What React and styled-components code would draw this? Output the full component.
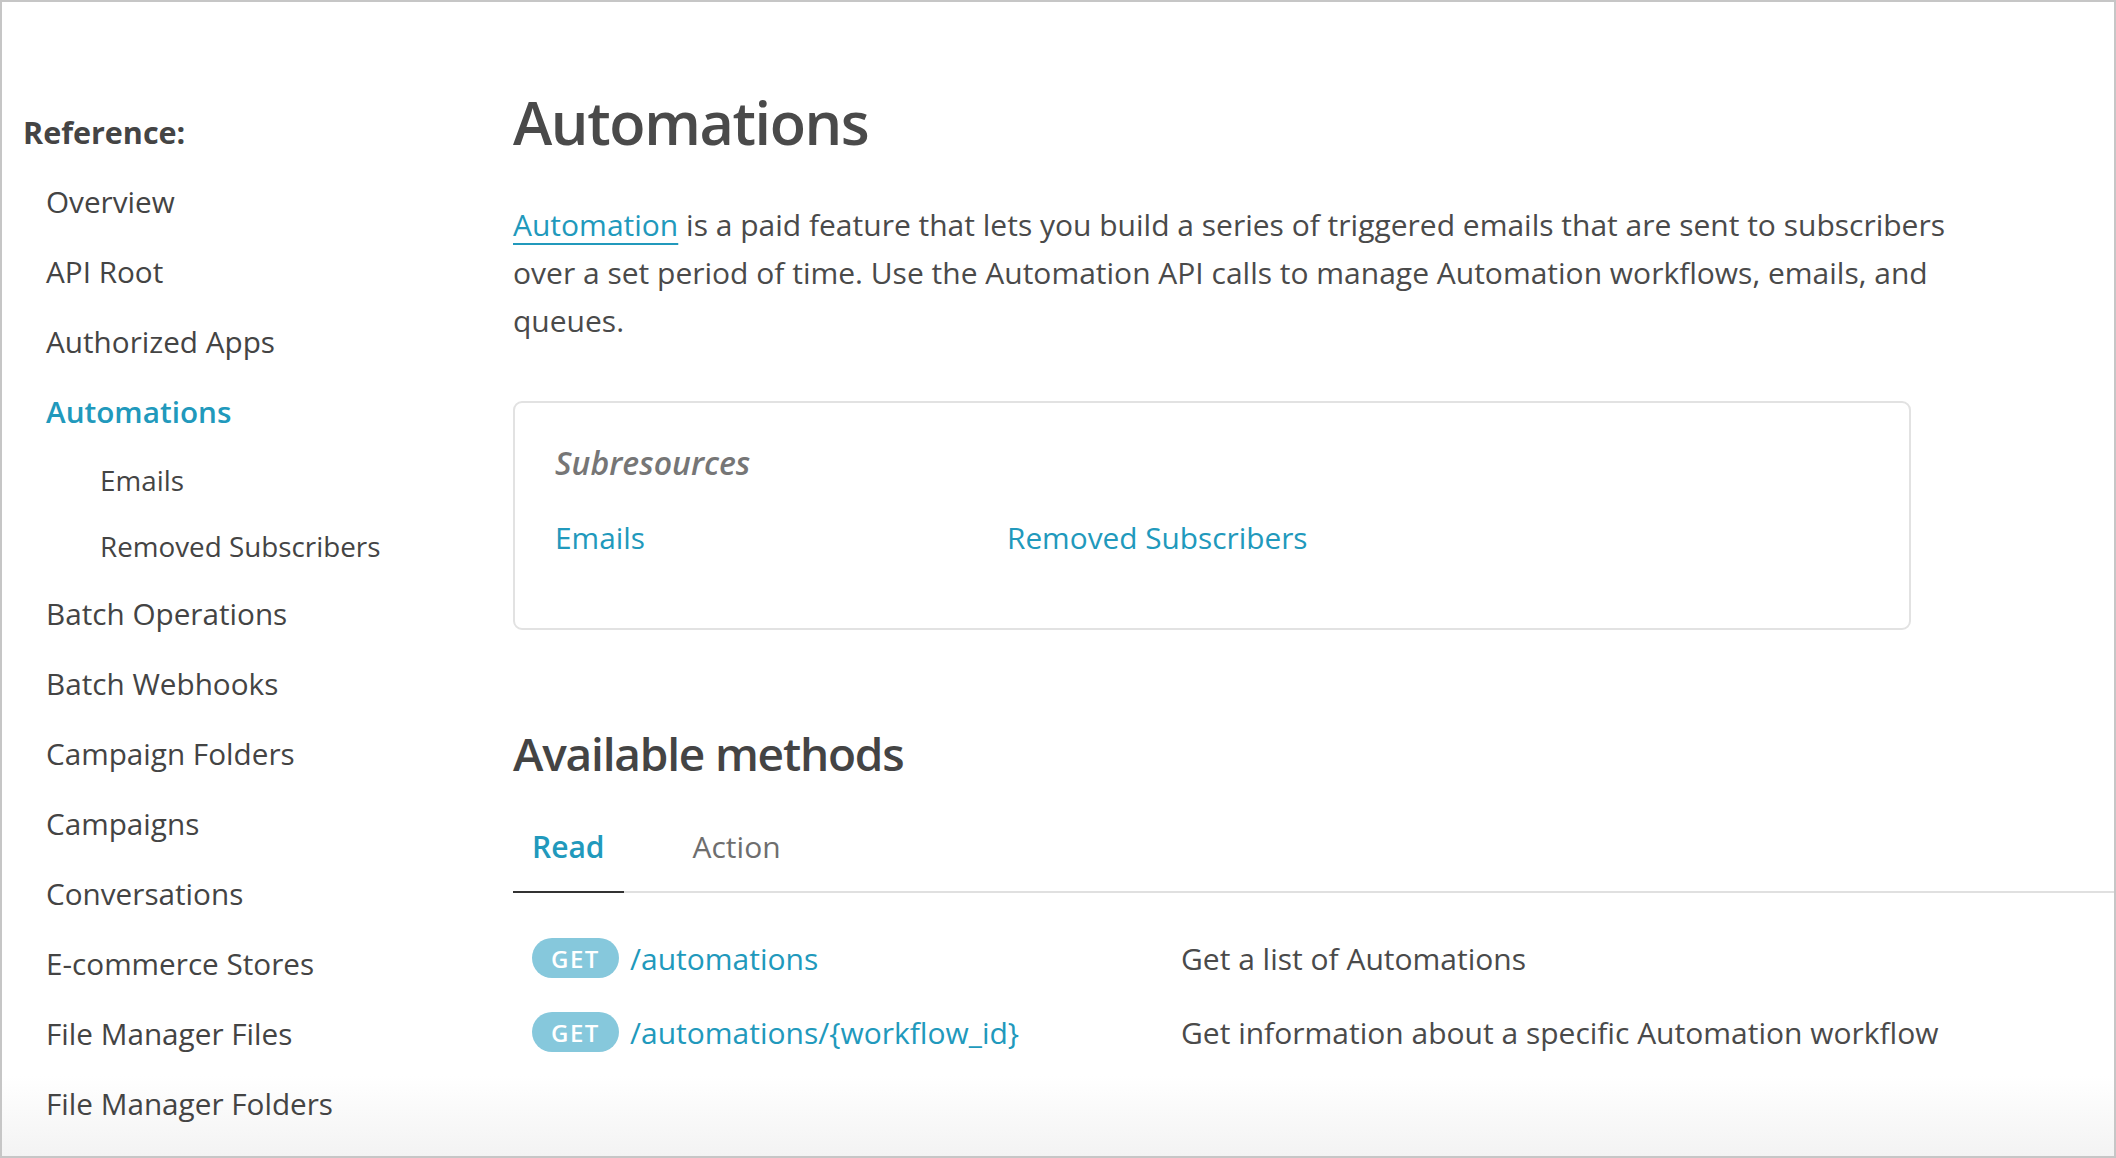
import React from "react";
import styled, { createGlobalStyle } from "styled-components";

const Global = createGlobalStyle`
  html, body {
    margin: 0;
    padding: 0;
    background: #fff;
  }
  body {
    font-family: "Open Sans", "Noto Sans", sans-serif;
    color: #4a4a4a;
  }
  * { box-sizing: border-box; }
`;

const Frame = styled.div`
  width: 2116px;
  height: 1158px;
  border: 2px solid #c6c6c6;
  overflow: hidden;
  display: grid;
  grid-template-columns: 511px 1fr;
  background: linear-gradient(to bottom, #fff calc(100% - 80px), #f3f3f3);
`;

const Sidebar = styled.nav`
  padding: 95px 0 0 21px;
  display: flex;
  flex-direction: column;
`;

const SideTitle = styled.div`
  font-size: 30.5px;
  font-weight: 700;
  line-height: 70px;
  color: #444;
`;

const SideItem = styled.a`
  display: block;
  font-size: ${(p) => (p.$sub ? "27.8px" : "29.7px")};
  line-height: ${(p) => (p.$sub ? "66px" : "70px")};
  padding-left: ${(p) => (p.$sub ? "77px" : "23px")};
  font-weight: ${(p) => (p.$active ? 600 : 400)};
  color: ${(p) => (p.$active ? "#2199bc" : "#444")};
  text-decoration: none;
  white-space: nowrap;
`;

const Main = styled.main`
  padding-top: 84px;
  display: flex;
  flex-direction: column;
  min-width: 0;
`;

const Title = styled.h1`
  margin: 0;
  font-size: 59.4px;
  line-height: 72px;
  font-weight: 600;
  letter-spacing: -1.4px;
  color: #4a4a4a;
`;

const Intro = styled.p`
  margin: 43px 0 0;
  max-width: 1460px;
  font-size: 30px;
  line-height: 48px;
  color: #4a4a4a;
`;

const Link = styled.a`
  color: #2199bc;
  text-decoration: ${(p) => (p.$underline ? "underline" : "none")};
  text-decoration-thickness: 2px;
  text-underline-offset: 7px;
`;

const SubBox = styled.section`
  margin-top: 56px;
  width: 1398px;
  height: 229px;
  border: 2px solid #e2e2e2;
  border-radius: 9px;
  padding: 40px 40px 0;
`;

const SubTitle = styled.h3`
  margin: 0;
  font-size: 32px;
  line-height: 40px;
  font-style: italic;
  font-weight: 600;
  color: #767676;
`;

const SubLinks = styled.div`
  margin-top: 35px;
  display: grid;
  grid-template-columns: 452px 452px;
  font-size: 29.8px;
  line-height: 40px;
`;

const SectionTitle = styled.h2`
  margin: 95px 0 0;
  font-size: 46px;
  line-height: 56px;
  font-weight: 600;
  letter-spacing: -1.2px;
  color: #444;
`;

const Tabs = styled.div`
  margin-top: 46px;
  display: flex;
  gap: 50px;
  border-bottom: 2px solid #e0e0e0;
`;

const Tab = styled.button`
  border: 0;
  background: none;
  font-family: inherit;
  font-size: 30px;
  line-height: 40px;
  padding: 0 19px 24px;
  margin-bottom: -2px;
  font-weight: ${(p) => (p.$active ? 600 : 500)};
  color: ${(p) => (p.$active ? "#2199bc" : "#6e6e6e")};
  border-bottom: 2px solid ${(p) => (p.$active ? "#333" : "transparent")};
  cursor: pointer;
`;

const Methods = styled.div`
  margin-top: 28px;
  padding-left: 19px;
  display: flex;
  flex-direction: column;
`;

const MethodRow = styled.div`
  height: 74px;
  display: grid;
  grid-template-columns: 649px 1fr;
  align-items: center;
`;

const Endpoint = styled.div`
  display: flex;
  align-items: center;
  gap: 11px;
`;

const Badge = styled.span`
  width: 87px;
  height: 40px;
  border-radius: 20px;
  background: #86c8dc;
  color: #fff;
  font-size: 24px;
  font-weight: 600;
  letter-spacing: 1.5px;
  display: flex;
  align-items: center;
  justify-content: center;
`;

const Path = styled.a`
  color: #2199bc;
  font-size: 30px;
  text-decoration: none;
`;

const Desc = styled.span`
  font-size: 30px;
  color: #4a4a4a;
`;

const nav = [
  { label: "Overview" },
  { label: "API Root" },
  { label: "Authorized Apps" },
  { label: "Automations", active: true },
  { label: "Emails", sub: true },
  { label: "Removed Subscribers", sub: true },
  { label: "Batch Operations" },
  { label: "Batch Webhooks" },
  { label: "Campaign Folders" },
  { label: "Campaigns" },
  { label: "Conversations" },
  { label: "E-commerce Stores" },
  { label: "File Manager Files" },
  { label: "File Manager Folders" },
];

const methods = [
  { path: "/automations", desc: "Get a list of Automations" },
  {
    path: "/automations/{workflow_id}",
    desc: "Get information about a specific Automation workflow",
  },
];

const App = () => {
  return (
    <React.Fragment>
      <Global />
      <Frame>
        <Sidebar>
          <SideTitle>Reference:</SideTitle>
          {nav.map((item) => (
            <SideItem key={item.label} $sub={item.sub} $active={item.active}>
              {item.label}
            </SideItem>
          ))}
        </Sidebar>
        <Main>
          <Title>Automations</Title>
          <Intro>
            <Link $underline>Automation</Link> is a paid feature that lets you
            build a series of triggered emails that are sent to subscribers over
            a set period of time. Use the Automation API calls to manage
            Automation workflows, emails, and queues.
          </Intro>
          <SubBox>
            <SubTitle>Subresources</SubTitle>
            <SubLinks>
              <Link>Emails</Link>
              <Link>Removed Subscribers</Link>
            </SubLinks>
          </SubBox>
          <SectionTitle>Available methods</SectionTitle>
          <Tabs>
            <Tab $active>Read</Tab>
            <Tab>Action</Tab>
          </Tabs>
          <Methods>
            {methods.map((m) => (
              <MethodRow key={m.path}>
                <Endpoint>
                  <Badge>GET</Badge>
                  <Path>{m.path}</Path>
                </Endpoint>
                <Desc>{m.desc}</Desc>
              </MethodRow>
            ))}
          </Methods>
        </Main>
      </Frame>
    </React.Fragment>
  );
};

export default App;
